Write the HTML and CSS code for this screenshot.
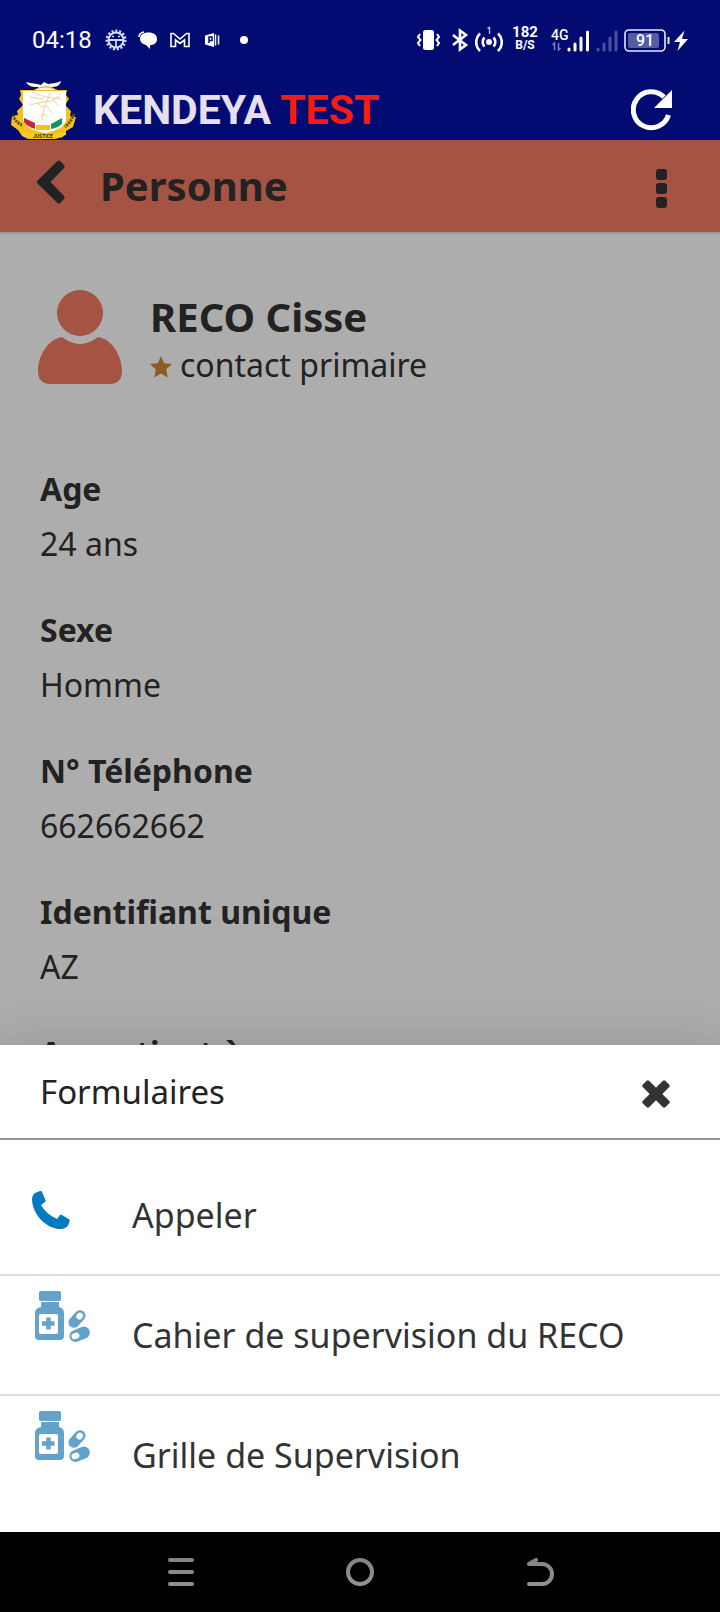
FILE: index.html
```html
<!DOCTYPE html>
<html lang="fr">
<head>
<meta charset="utf-8">
<meta name="viewport" content="width=device-width, initial-scale=1">
<title>Kendeya – Personne</title>
<link rel="stylesheet" href="styles.css">
</head>
<body>
<div class="screen">
  <div class="status">
    <div class="status-left">
      <span class="clock">04:18</span>
      <svg width="24" height="24" viewBox="0 0 24 24" fill="none" stroke="#d5d8f5"><circle cx="12" cy="12" r="9" stroke-width="3" stroke-dasharray="2 1.770"/><circle cx="12" cy="12" r="7.500" stroke-width="2"/><path d="M5 12h14M12 12v7" stroke-width="1.800"/><path d="M8 8.500h2M14 8.500h2" stroke-width="1.500"/></svg>
      <svg width="24" height="24" viewBox="0 0 24 24"><path d="M4 11C4 7 7 4.500 12.500 4.500S21 7 21 11s-3 6-7 6.300V21l-4-4C6 16 4 14 4 11z" fill="#fff"/><path d="M3 9c0-3 2-4.500 5-5" fill="none" stroke="#fff" stroke-width="1.500"/></svg>
      <svg width="24" height="24" viewBox="0 0 24 24" fill="none" stroke="#fff" stroke-width="1.600"><path d="M3 18.500V5.500h2.500L12 11l6.500-5.500H21v13h-4.500V12L12 15.500 7.500 12v6.500z"/></svg>
      <svg width="24" height="24" viewBox="0 0 24 24"><path d="M5 7.500 14 5v14l-9-2.500z" fill="#fff"/><path d="M9 15V9h3v3.500H9.500" fill="none" stroke="#010b72" stroke-width="1.500"/><path d="M15.500 6.500v11M18.500 7.500v9" fill="none" stroke="#fff" stroke-width="1.500"/></svg>
      <svg width="24" height="24" viewBox="0 0 24 24"><circle cx="12" cy="12" r="4" fill="#fff"/></svg>
    </div>
    <div class="status-right">
      <svg class="spaced" width="25" height="28" viewBox="0 0 25 28"><rect x="7" y="4" width="11" height="20" rx="2.500" fill="#fff"/><path d="M4 8 2 11l2.500 3L2 17l2 3M21 8l2 3-2.500 3 2.500 3-2 3" fill="none" stroke="#fff" stroke-width="2"/></svg>
      <svg width="18" height="28" viewBox="0 0 18 28" fill="none" stroke="#fff" stroke-width="2.600"><path d="M2 9l13 10-6 4.500v-19L15 9 2 19"/></svg>
      <svg width="28" height="28" viewBox="0 0 28 28" fill="none" stroke="#fff" stroke-width="2.600"><circle cx="14" cy="16" r="3" fill="#fff" stroke="none"/><path d="M9.500 11.500a6.500 6.500 0 0 0 0 9M18.500 11.500a6.500 6.500 0 0 1 0 9M5 7.500a12 12 0 0 0 0 17.500M23 7.500a12 12 0 0 1 0 17.500"/><path d="M12.500 2.500 14.500 1.500V8" stroke="#aeb2dc" stroke-width="1.400"/></svg>
      <div class="rate spaced"><span>182</span><span class="rate-unit">B/S</span></div>
      <svg width="39" height="28" viewBox="0 0 39 28"><text class="cell-tag" x="0" y="14">4G</text><path d="M3.500 24v-7l-2 2M7.500 17v7l2-2" fill="none" stroke="#7c80b8" stroke-width="1.500"/><path d="M18 23v1M24 18v6M30 12v12M36.500 6v18" stroke="#fff" stroke-width="3" stroke-linecap="round"/></svg>
      <svg width="22" height="28" viewBox="0 0 22 28"><path d="M2 23v1M8 18v6M14 12v12M20 6v18" stroke="#4b509a" stroke-width="3" stroke-linecap="round"/></svg>
      <svg width="66" height="28" viewBox="0 0 66 28"><rect x="1" y="4" width="40" height="21" rx="4" fill="none" stroke="#e8e9ff" stroke-width="1.600"/><rect x="4" y="7" width="31" height="15" rx="2" fill="#565ba5"/><path d="M44.500 11v7" stroke="#e8e9ff" stroke-width="2"/><text class="battery" x="12" y="20">91</text><path d="M60.500 4.500 50 16h6l-2.500 9L64 13h-6z" fill="#fff"/></svg>
    </div>
  </div>

  <header class="brand">
    <svg width="68" height="60" viewBox="0 0 68 60">
      <path d="M10 10h47l-1 5 3 4-4 6 6 6-1 5 6 1-3 10-7 4-3 6-8 2H18l-6-3-4-6-7-5 1-9 6-1-1-4 6-6-4-6 2-4z" fill="#f5c21b"/>
      <path d="M13 11h43v28c0 6-6 11-21 14-15-3-22-8-22-14z" fill="#fff"/>
      <path d="M16 2c6 2 10 1 15 3l3-3 4 2c5-1 9-1 13-3-1 5-5 6-10 6l6 3H25l4-3c-6 0-10 0-13-5z" fill="#fff8df"/>
      <path d="M24 10l8-3h7l8 3" fill="none" stroke="#b5a06a"/>
      <path d="M22 12c8 4 17 6 29 7M50 16l-9 5-8 1-13 3M40 13l-6 15-2 13M34 19l-15-2M36 25l6 8M34 28l-6-4M33 34l-4 4M33 32l4 5M43 20l6 6" fill="none" stroke="#ead49e"/>
      <path d="M14 38l11 5v6q-9-3-11-7z" fill="#c12a2d"/><path d="M26 45h14v5H26z" fill="#f5c21b"/><path d="M41 44l11-6v6q-4 4-11 5z" fill="#149463"/>
      <path d="M12 51c12 5 29 6 44 0v4c-14 5-30 5-43 1z" fill="#f9cb2f"/>
      <path d="M3 35q2 7 9 10M64 34q-3 8-9 13" fill="none" stroke="#614a10" stroke-width="3" stroke-dasharray="2 1"/>
      <text class="motto" x="23" y="58">JUSTICE</text>
    </svg>
    <h1 class="name">KENDEYA <span class="name-env">TEST</span></h1>
    <button class="icon-btn" aria-label="Actualiser"><svg width="42" height="42" viewBox="0 0 42 42"><path d="M37.500 26A18 18 0 1 1 33 8" fill="none" stroke="#fff" stroke-width="5"/><path d="M41 1v18H23z" fill="#fff"/></svg></button>
  </header>

  <div class="toolbar">
    <button class="icon-btn back" aria-label="Retour"><svg width="30" height="44" viewBox="0 0 30 44"><path d="M21.500 1 1.500 20.500q-1.500 1.500 0 3L21.500 43q1 1 2.500 0l4-4q1.500-1.500 0-3L14.500 22 28 8q1.500-1.500 0-3l-4-4q-1.500-1-2.500 0z" fill="#222"/></svg></button>
    <h2 class="title">Personne</h2>
    <button class="icon-btn more" aria-label="Plus d’options"><svg width="11" height="40" viewBox="0 0 11 40" fill="#222"><rect width="11" height="11" y="1" rx="3"/><rect width="11" height="11" y="15" rx="3"/><rect width="11" height="11" y="29" rx="3"/></svg></button>
  </div>

  <main class="content">
    <section class="profile">
      <svg width="84" height="96" viewBox="0 0 84 96" fill="#a55343"><circle cx="42" cy="24" r="23"/><path d="M24 48q18 14 36 0c14 2 24 19 24 34q0 13-13 13H13Q0 95 0 82c0-15 10-32 24-34z"/></svg>
      <div class="who">
        <h3 class="person">RECO Cisse</h3>
        <p class="role"><svg class="star" width="22" height="22" viewBox="0 0 22 22"><path d="M11 0l3.200 7.200 7.800.8-5.800 5.200L17.800 21.500 11 17.500 4.200 21.500l1.600-8.300L0 8l7.800-.8z" fill="#8d5c23"/></svg>contact primaire</p>
      </div>
    </section>
    <dl class="fields">
      <div class="field"><dt>Age</dt><dd>24 ans</dd></div>
      <div class="field"><dt>Sexe</dt><dd>Homme</dd></div>
      <div class="field"><dt>N° Téléphone</dt><dd>662662662</dd></div>
      <div class="field"><dt>Identifiant unique</dt><dd>AZ</dd></div>
      <div class="field"><dt>Appartient à</dt></div>
    </dl>
  </main>

  <section class="sheet" aria-labelledby="sheet-title">
    <div class="sheet-head">
      <h2 class="sheet-title" id="sheet-title">Formulaires</h2>
      <button class="icon-btn close" aria-label="Fermer"><svg width="28" height="28" viewBox="0 0 28 28"><g fill="#333"><rect x="-2" y="9.500" width="32" height="9" rx="2" transform="rotate(45 14 14)"/><rect x="-2" y="9.500" width="32" height="9" rx="2" transform="rotate(-45 14 14)"/></g></svg></button>
    </div>
    <div class="actions">
      <button class="action"><span class="action-icon"><svg class="phone" width="38" height="38" viewBox="0 0 38 38"><path d="M8 0 3 2Q0 4 0 9c1 15 14 28 27 29 6 0 9-2 10-6l1-3-8-5q-1-.5-2 0l-3 4Q14 23 9 14l4-3q1-1 .5-2L10 1Q9-.5 8 0z" fill="#007ac0"/></svg></span><span>Appeler</span></button>
      <button class="action"><span class="action-icon"><svg width="56" height="52" viewBox="0 0 56 52"><g fill="#64a2ca"><rect x="4" width="22" height="10" rx="1.500"/><path d="M6 11h18v5q5 1 5 6v23q0 4-4 4H4q-4 0-4-4V22q0-5 6-6z"/></g><rect x="4" y="23" width="19" height="20" rx="2" fill="#fff"/><path d="M13.500 26.500v12M7 32.500h12.500" stroke="#64a2ca" stroke-width="4.500"/><g transform="rotate(-48 42 28)"><rect x="32" y="22.500" width="20" height="11" rx="5.500" fill="#64a2ca"/><rect x="42.500" y="25" width="7" height="6" rx="3" fill="#fff"/></g><g transform="rotate(-22 44 43)"><rect x="34" y="37.500" width="21" height="12" rx="6" fill="#64a2ca"/><rect x="36" y="40.500" width="8" height="6" rx="3" fill="#fff"/></g></svg></span><span>Cahier de supervision du RECO</span></button>
      <button class="action"><span class="action-icon"><svg width="56" height="52" viewBox="0 0 56 52"><g fill="#64a2ca"><rect x="4" width="22" height="10" rx="1.500"/><path d="M6 11h18v5q5 1 5 6v23q0 4-4 4H4q-4 0-4-4V22q0-5 6-6z"/></g><rect x="4" y="23" width="19" height="20" rx="2" fill="#fff"/><path d="M13.500 26.500v12M7 32.500h12.500" stroke="#64a2ca" stroke-width="4.500"/><g transform="rotate(-48 42 28)"><rect x="32" y="22.500" width="20" height="11" rx="5.500" fill="#64a2ca"/><rect x="42.500" y="25" width="7" height="6" rx="3" fill="#fff"/></g><g transform="rotate(-22 44 43)"><rect x="34" y="37.500" width="21" height="12" rx="6" fill="#64a2ca"/><rect x="36" y="40.500" width="8" height="6" rx="3" fill="#fff"/></g></svg></span><span>Grille de Supervision</span></button>
    </div>
  </section>

  <nav class="system-nav" aria-label="Système">
    <button class="icon-btn" aria-label="Applications récentes"><svg width="28" height="28" viewBox="0 0 28 28"><path d="M3 2h22M3 14h22M3 26h22" stroke="#999" stroke-width="4" stroke-linecap="round"/></svg></button>
    <button class="icon-btn" aria-label="Accueil"><svg width="28" height="28" viewBox="0 0 28 28"><circle cx="14" cy="14" r="12" fill="none" stroke="#999" stroke-width="4"/></svg></button>
    <button class="icon-btn" aria-label="Précédent"><svg width="28" height="28" viewBox="0 0 28 28"><path d="M10 2 3 6h13a10 10 0 0 1 0 20H3" fill="none" stroke="#999" stroke-width="4" stroke-linecap="round" stroke-linejoin="round"/></svg></button>
  </nav>
</div>
</body>
</html>
```
FILE: styles.css
```css
* { box-sizing: border-box; }

body, h1, h2, h3, p, dl, dd { margin: 0; }

body {
  font-family: "Noto Sans", sans-serif;
  font-size: 32px;
  color: #222;
}

svg { display: block; flex: none; }

.screen {
  display: flex;
  flex-direction: column;
  height: 100vh;
  background: #adadad;
}

.icon-btn {
  display: flex;
  padding: 0;
  border: 0;
  background: none;
}

/* Status bar */
.status {
  display: flex;
  flex: none;
  justify-content: space-between;
  align-items: center;
  height: 80px;
  padding: 0 30px 0 32px;
  background: #010b72;
  color: #fff;
  font-family: Roboto, sans-serif;
}

.status-left { display: flex; align-items: center; gap: 8px; }
.status-right { display: flex; align-items: center; gap: 6px; }
.spaced { margin-right: 4px; }
.clock { width: 64px; font-size: 24px; }
.rate {
  display: flex;
  flex-direction: column;
  align-items: center;
  width: 32px;
  padding-bottom: 4px;
  font-size: 15px;
  font-weight: 700;
  line-height: 14px;
}
.rate-unit { font-size: 12px; line-height: 12px; }
.cell-tag { fill: #fff; font-size: 14px; font-weight: 500; }
.battery { fill: #fff; font-size: 16px; font-weight: 500; }

/* Brand bar */
.brand {
  display: flex;
  flex: none;
  align-items: center;
  height: 60px;
  padding: 0 47px 0 10px;
  background: #010b72;
}
.name {
  flex: 1;
  margin-left: 15px;
  color: #e6e0ee;
  font-family: Roboto, sans-serif;
  font-size: 41px;
  font-weight: 700;
  line-height: 60px;
}
.name-env { color: #fa1a10; }
.motto { fill: #3d300b; font-family: Roboto, sans-serif; font-size: 5px; font-weight: 700; }

/* Page toolbar */
.toolbar {
  display: flex;
  flex: none;
  align-items: center;
  height: 94px;
  padding: 0 53px 0 36px;
  border-bottom: 2px solid #999;
  background: #a55343;
}
.back { padding-bottom: 8px; }
.more { padding-top: 4px; }
.title { flex: 1; margin-left: 34px; font-size: 40px; line-height: 56px; }

/* Record */
.content {
  flex: 1;
  min-height: 0;
  overflow: hidden;
  padding: 53px 40px 0 38px;
}
.profile { display: flex; align-items: center; gap: 28px; }
.who { padding-top: 4px; }
.person { font-size: 40px; line-height: 52px; }
.role { display: flex; align-items: center; gap: 8px; line-height: 44px; }
.star { margin-top: 4px; }
.fields { margin-top: 80px; padding-left: 2px; }
.field { padding-bottom: 42px; }
dt { font-weight: 700; line-height: 44px; }
dd { padding-top: 11px; line-height: 44px; }

/* Bottom sheet */
.sheet {
  z-index: 1;
  flex: none;
  background: #fff;
  box-shadow: 0 16px 20px -10px rgba(0, 0, 0, .2), 0 32px 48px 4px rgba(0, 0, 0, .14), 0 12px 60px 10px rgba(0, 0, 0, .12);
}
.sheet-head {
  display: flex;
  justify-content: space-between;
  align-items: center;
  height: 95px;
  padding: 0 50px 0 40px;
  border-bottom: 2px solid #999;
}
.sheet-title { font-size: 33px; font-weight: 400; }
.close { padding-top: 4px; }
.actions { padding: 16px 0; }
.action {
  display: flex;
  align-items: center;
  width: 100%;
  height: 120px;
  padding: 0 32px;
  border: 0;
  border-bottom: 2px solid #ddd;
  background: none;
  color: #333;
  font: 34px "Noto Sans", sans-serif;
  text-align: left;
}
.action:last-child { border-bottom-color: transparent; }
.action-icon {
  flex: none;
  align-self: flex-start;
  width: 100px;
  padding: 15px 0 0 3px;
}
.action-icon:has(.phone) { padding: 35px 0 0; }

/* System navigation */
.system-nav {
  display: flex;
  flex: none;
  justify-content: space-evenly;
  align-items: center;
  height: 80px;
  padding: 0 15px;
  background: #000;
}
.system-nav .icon-btn { width: 28px; }
```
